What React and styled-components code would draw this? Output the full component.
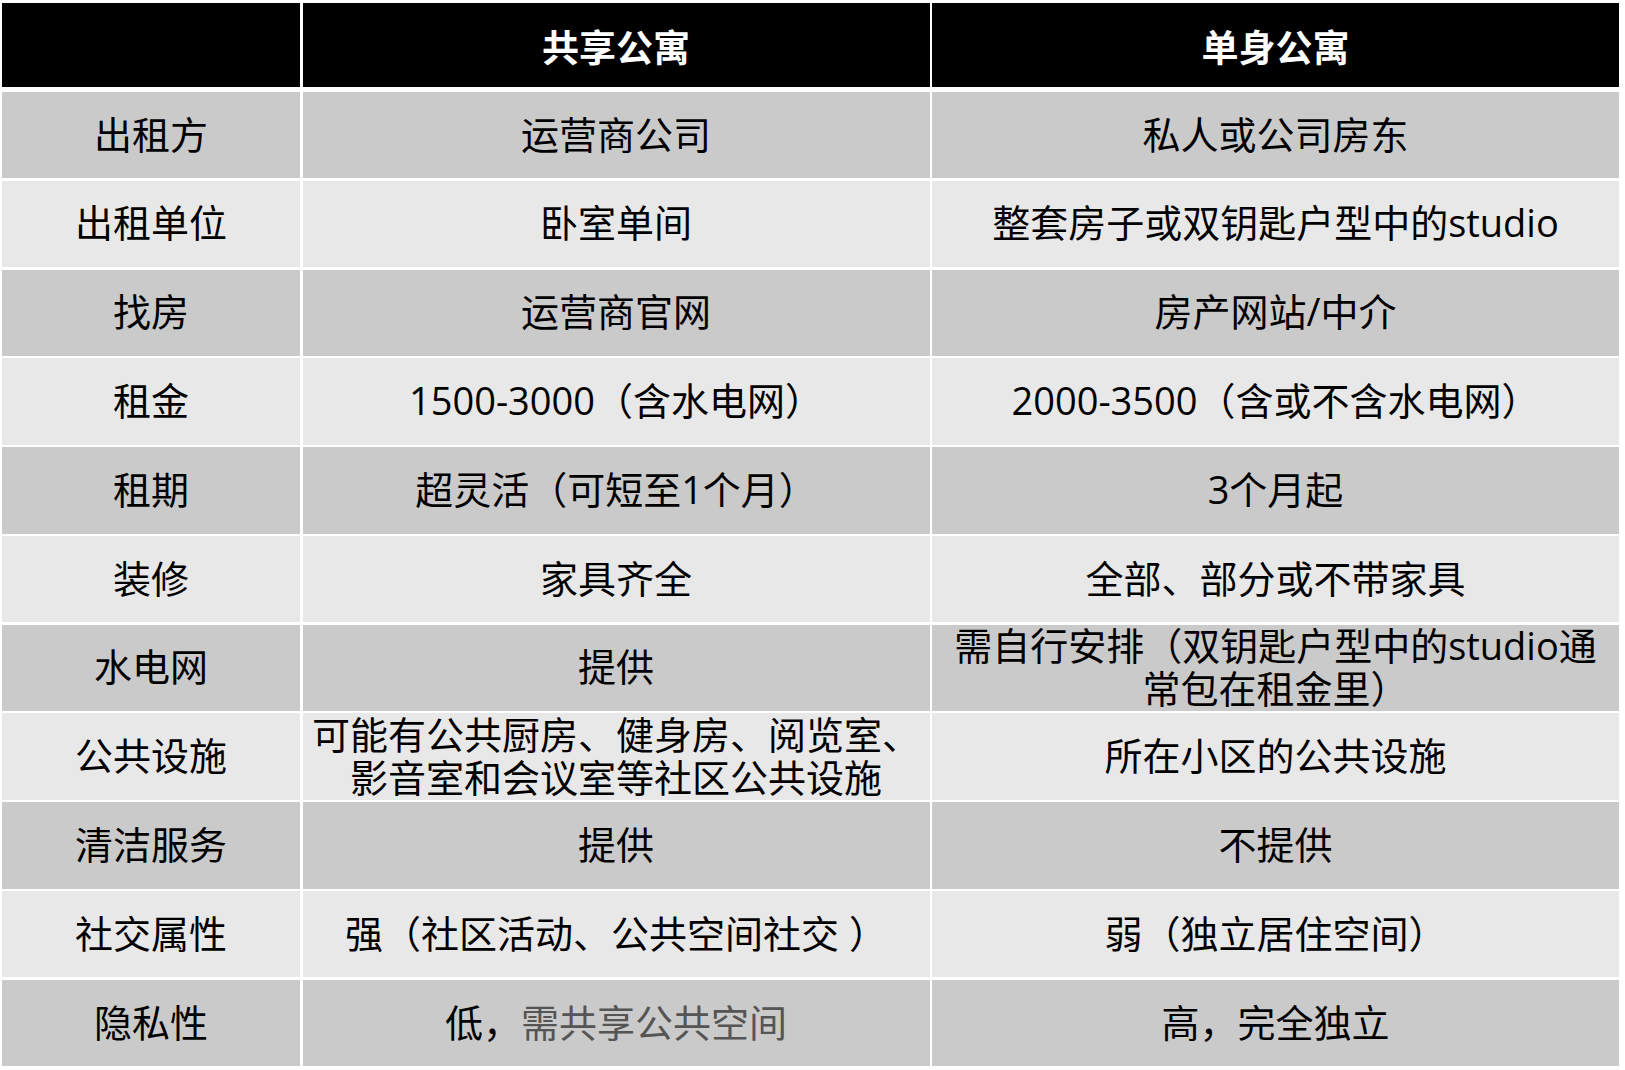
import React from "react";
import styled, { createGlobalStyle } from "styled-components";

const GlobalStyle = createGlobalStyle`
  html, body { margin: 0; padding: 0; background: #ffffff; }
  body { font-family: "Open Sans", "Noto Sans CJK SC", sans-serif; }
`;

const Page = styled.div`
  padding: 3px 0 0 2px;
  width: 1617px;
`;

const Table = styled.div`
  display: flex;
  flex-direction: column;
  gap: 5px;
  background: #ffffff;
`;

const HeaderRow = styled.div`
  display: grid;
  grid-template-columns: 298px 627px 687px;
  column-gap: 2.5px;
  height: 84px;
`;

const HeaderCell = styled.div`
  background: #000000;
  color: #ffffff;
  font-weight: 700;
  font-size: 37px;
  display: flex;
  align-items: center;
  justify-content: center;
  padding-top: 2px;
  box-sizing: border-box;
`;

const Body = styled.div`
  display: grid;
  grid-template-columns: 298px 627px 687px;
  grid-auto-rows: 86.4px;
  column-gap: 2.5px;
  row-gap: 2.4px;
`;

const Cell = styled.div`
  background: ${(p) => (p.$dark ? "#cacaca" : "#e8e8e8")};
  color: #000000;
  font-size: 38px;
  line-height: 43px;
  display: flex;
  flex-direction: column;
  align-items: center;
  justify-content: center;
  text-align: center;
  white-space: nowrap;
  padding-bottom: 2px;
  box-sizing: border-box;
`;

const Line = styled.span`
  display: block;
`;

const Muted = styled.span`
  color: #555555;
`;

const rows = [
  ["出租方", "运营商公司", "私人或公司房东"],
  ["出租单位", "卧室单间", "整套房子或双钥匙户型中的studio"],
  ["找房", "运营商官网", "房产网站/中介"],
  ["租金", "1500-3000（含水电网）", "2000-3500（含或不含水电网）"],
  ["租期", "超灵活（可短至1个月）", "3个月起"],
  ["装修", "家具齐全", "全部、部分或不带家具"],
  ["水电网", "提供", ["需自行安排（双钥匙户型中的studio通", "常包在租金里）"]],
  ["公共设施", ["可能有公共厨房、健身房、阅览室、", "影音室和会议室等社区公共设施"], "所在小区的公共设施"],
  ["清洁服务", "提供", "不提供"],
  ["社交属性", "强（社区活动、公共空间社交 ）", "弱（独立居住空间）"],
  ["隐私性", <Line>低，<Muted>需共享公共空间</Muted></Line>, "高，完全独立"],
];

const renderContent = (c) =>
  Array.isArray(c) ? c.map((l, i) => <Line key={i}>{l}</Line>) : c;

export default function App() {
  return (
    <Page>
      <GlobalStyle />
      <Table>
        <HeaderRow>
          <HeaderCell />
          <HeaderCell>共享公寓</HeaderCell>
          <HeaderCell>单身公寓</HeaderCell>
        </HeaderRow>
        <Body>
          {rows.map((r, i) =>
            r.map((c, j) => (
              <Cell key={`${i}-${j}`} $dark={i % 2 === 0}>
                {renderContent(c)}
              </Cell>
            ))
          )}
        </Body>
      </Table>
    </Page>
  );
}
